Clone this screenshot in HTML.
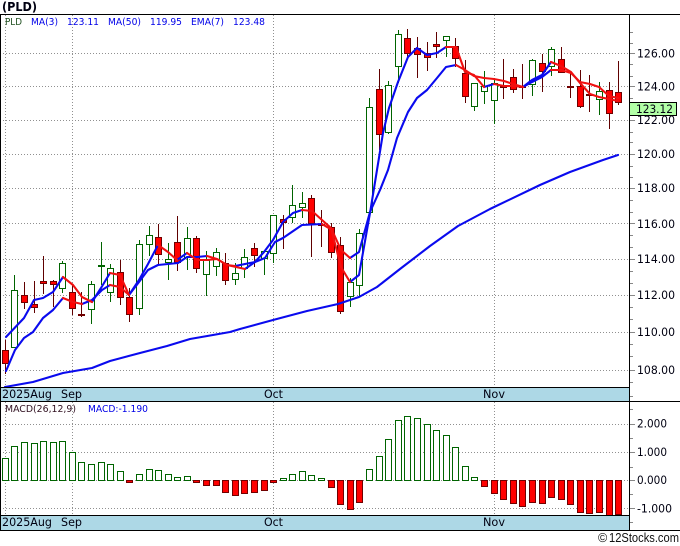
<!DOCTYPE html>
<html><head><meta charset="utf-8"><title>PLD</title>
<style>html,body{margin:0;padding:0;background:#fff;width:680px;height:546px;overflow:hidden}svg{display:block}
text{font-family:"DejaVu Sans","Liberation Sans",sans-serif;font-size:11.5px;fill:#001;lengthAdjust:spacingAndGlyphs}
.l{font-size:10px;fill:#0000e8}</style></head><body>
<svg width="680" height="546" viewBox="0 0 680 546" xmlns="http://www.w3.org/2000/svg">
<rect width="680" height="546" fill="#fff"/>
<g stroke="#909090" stroke-width="1" stroke-dasharray="1 2" fill="none" shape-rendering="crispEdges">
<path d="M0 53.5H629M0 86.5H629M0 120.5H629M0 154.5H629M0 188.5H629M0 223.5H629M0 259.5H629M0 295.5H629M0 332.5H629M0 370.5H629M0 424.5H629M0 452.5H629M0 480.5H629M0 508.5H629"/>
<path d="M5.5 15V515M72.5 15V515M273.5 15V515M494.5 15V515"/>
</g>
<path fill="none" stroke="#006400" d="M14.5 275V348M62.5 261V293M91.5 281V324M101.5 242V285M110.5 264V302M139.5 240V315M149.5 226V256M168.5 243V280M187.5 227V270M206.5 251V296M216.5 248V276M235.5 263V285M244.5 249V278M264.5 251V275M273.5 215V263M292.5 185V223M302.5 192V218M350.5 278V307M359.5 229V297M369.5 98V212M388.5 81V134M398.5 30V83M446.5 36V57M474.5 83V111M484.5 71V104M494.5 78V124M532.5 59V96M551.5 47V76M599.5 82V115"/>
<path fill="none" stroke="#600000" d="M5.5 340V374M24.5 282V309M34.5 281V313M43.5 256V294M53.5 280V307M72.5 285V315M81.5 292V317M120.5 260V305M129.5 288V322M158.5 224V265M177.5 216V271M196.5 236V273M225.5 253V285M254.5 243V267M283.5 215V249M311.5 195V257M321.5 210V247M331.5 223V258M340.5 237V314M379.5 69V150M407.5 29V57M417.5 37V78M427.5 42V71M436.5 32V58M455.5 38V67M465.5 60V103M503.5 59V99M513.5 69V93M522.5 64V99M542.5 54V92M561.5 47V73M570.5 72V98M580.5 70V108M589.5 75V112M609.5 82V129M618.5 61V105"/>
<path fill="#fff" stroke="#006400" d="M11.5 290.5h6V347.5h-6ZM59.5 263.5h6V288.5h-6ZM88.5 284.5h6V309.5h-6ZM98.5 265.5h6V266.5h-6ZM107.5 268.5h6V292.5h-6ZM136.5 244.5h6V308.5h-6ZM146.5 235.5h6V244.5h-6ZM165.5 259.5h6V262.5h-6ZM184.5 238.5h6V257.5h-6ZM203.5 260.5h6V274.5h-6ZM213.5 252.5h6V266.5h-6ZM232.5 273.5h6V279.5h-6ZM241.5 257.5h6V268.5h-6ZM261.5 251.5h6V258.5h-6ZM270.5 215.5h6V253.5h-6ZM289.5 205.5h6V217.5h-6ZM299.5 203.5h6V207.5h-6ZM347.5 282.5h6V296.5h-6ZM356.5 233.5h6V285.5h-6ZM366.5 107.5h6V212.5h-6ZM385.5 85.5h6V132.5h-6ZM395.5 34.5h6V66.5h-6ZM443.5 36.5h6V40.5h-6ZM471.5 83.5h6V106.5h-6ZM481.5 86.5h6V91.5h-6ZM491.5 83.5h6V100.5h-6ZM529.5 60.5h6V84.5h-6ZM548.5 49.5h6V66.5h-6ZM596.5 91.5h6V99.5h-6Z"/>
<path fill="#f00" stroke="#700000" d="M2.5 350.5h6V363.5h-6ZM21.5 295.5h6V302.5h-6ZM31.5 304.5h6V307.5h-6ZM40.5 281.5h6V283.5h-6ZM50.5 281.5h6V284.5h-6ZM69.5 292.5h6V308.5h-6ZM78.5 314.5h6V315.5h-6ZM117.5 272.5h6V297.5h-6ZM126.5 297.5h6V314.5h-6ZM155.5 237.5h6V254.5h-6ZM174.5 242.5h6V262.5h-6ZM193.5 238.5h6V268.5h-6ZM222.5 263.5h6V280.5h-6ZM251.5 248.5h6V255.5h-6ZM280.5 219.5h6V222.5h-6ZM308.5 198.5h6V223.5h-6ZM318.5 224.5h6V225.5h-6ZM328.5 227.5h6V252.5h-6ZM337.5 245.5h6V311.5h-6ZM376.5 89.5h6V134.5h-6ZM404.5 38.5h6V53.5h-6ZM414.5 48.5h6V54.5h-6ZM424.5 53.5h6V57.5h-6ZM433.5 44.5h6V46.5h-6ZM452.5 46.5h6V58.5h-6ZM462.5 73.5h6V96.5h-6ZM500.5 86.5h6V87.5h-6ZM510.5 77.5h6V89.5h-6ZM519.5 86.5h6V87.5h-6ZM539.5 63.5h6V71.5h-6ZM558.5 59.5h6V72.5h-6ZM567.5 86.5h6V87.5h-6ZM577.5 86.5h6V106.5h-6ZM586.5 94.5h6V95.5h-6ZM606.5 90.5h6V113.5h-6ZM615.5 92.5h6V102.5h-6Z"/>
<g fill="none" stroke-width="2.1" stroke-linejoin="round" stroke-linecap="round">
<g stroke="#0a0aee">
<polyline points="5,387 33,382 63,373 92,368 110,361 140,353 167,346 190,339 213,335 230,332 240,329 273,320 307,311 338,304 359,297 377,287 400,269 430,246 458,226 490,209 540,185 570,172 603,160 618,155"/>
<polyline points="6,337 24,318 34,300 43,298 53,292 63,277"/>
<polyline points="92,302 101,288 110,273"/>
<polyline points="129,295 139,280 148,264 158,245"/>
<polyline points="177,260 187,253"/>
<polyline points="245,269 255,262 264,252 273,240 283,222 293,213 302,210"/>
<polyline points="350,282 359,275 370,213 383,133 389,108 398,82 408,57 417,48 427,55 437,53 446,47"/>
<polyline points="484,87 494,84"/>
<polyline points="523,87 532,80 542,75 551,62"/>
<polyline points="6,371 15,350 24,338 33,332 43,318 53,310 63,298"/>
<polyline points="82,304 92,300 102,290 110,285"/>
<polyline points="129,295 139,282 148,270 158,265 168,264 178,263 187,257 197,257 207,256"/>
<polyline points="235,266 255,262 265,258 275,242 283,238 302,225 322,224"/>
<polyline points="350,258 359,252 370,212 380,190 388,170 397,138 408,112 417,98 427,90 437,78 446,67 456,65"/>
<polyline points="523,87 532,82 542,77 551,70"/>
</g>
<g stroke="#f01010">
<polyline points="63,277 73,285 82,297 92,302"/>
<polyline points="110,273 120,275 129,295"/>
<polyline points="158,245 168,252 177,260"/>
<polyline points="187,253 197,260 207,260 217,259 227,265 236,267 245,269"/>
<polyline points="302,210 312,211 322,220 331,228 341,267 350,282"/>
<polyline points="446,47 456,47 465,72 474,75 484,87"/>
<polyline points="494,84 504,86 513,86 523,87"/>
<polyline points="551,62 561,66 571,72 580,83 590,94 599,97 609,99 618,101"/>
<polyline points="63,298 73,302 82,304"/>
<polyline points="110,285 120,287 129,295"/>
<polyline points="207,256 217,259 227,265 235,266"/>
<polyline points="322,224 332,230 341,250 350,258"/>
<polyline points="456,65 465,70 474,76 484,78 494,79 504,81 513,84 523,87"/>
<polyline points="551,70 561,70 571,73 580,82 590,84 599,87 609,96 618,98"/>
</g>
</g>
<path fill="#fff" stroke="#006400" d="M2.5 458.5h6V480.5h-6ZM11.5 446.5h6V480.5h-6ZM21.5 442.5h6V480.5h-6ZM31.5 443.5h6V480.5h-6ZM40.5 441.5h6V480.5h-6ZM50.5 442.5h6V480.5h-6ZM59.5 441.5h6V480.5h-6ZM69.5 452.5h6V480.5h-6ZM78.5 462.5h6V480.5h-6ZM88.5 464.5h6V480.5h-6ZM98.5 462.5h6V480.5h-6ZM107.5 464.5h6V480.5h-6ZM117.5 471.5h6V480.5h-6ZM136.5 474.5h6V480.5h-6ZM146.5 469.5h6V480.5h-6ZM155.5 470.5h6V480.5h-6ZM165.5 474.5h6V480.5h-6ZM174.5 477.5h6V480.5h-6ZM184.5 476.5h6V480.5h-6ZM280.5 478.5h6V480.5h-6ZM289.5 474.5h6V480.5h-6ZM299.5 471.5h6V480.5h-6ZM308.5 475.5h6V480.5h-6ZM318.5 478.5h6V480.5h-6ZM366.5 469.5h6V480.5h-6ZM376.5 456.5h6V480.5h-6ZM385.5 439.5h6V480.5h-6ZM395.5 420.5h6V480.5h-6ZM404.5 416.5h6V480.5h-6ZM414.5 418.5h6V480.5h-6ZM424.5 424.5h6V480.5h-6ZM433.5 430.5h6V480.5h-6ZM443.5 435.5h6V480.5h-6ZM452.5 447.5h6V480.5h-6ZM462.5 466.5h6V480.5h-6ZM471.5 477.5h6V480.5h-6Z"/>
<path fill="#f00" stroke="#700000" d="M126.5 480.5h6V482.5h-6ZM193.5 480.5h6V482.5h-6ZM203.5 480.5h6V485.5h-6ZM213.5 480.5h6V485.5h-6ZM222.5 480.5h6V492.5h-6ZM232.5 480.5h6V495.5h-6ZM241.5 480.5h6V493.5h-6ZM251.5 480.5h6V492.5h-6ZM261.5 480.5h6V490.5h-6ZM270.5 480.5h6V482.5h-6ZM328.5 480.5h6V487.5h-6ZM337.5 480.5h6V504.5h-6ZM347.5 480.5h6V509.5h-6ZM356.5 480.5h6V502.5h-6ZM481.5 480.5h6V486.5h-6ZM491.5 480.5h6V493.5h-6ZM500.5 480.5h6V499.5h-6ZM510.5 480.5h6V503.5h-6ZM519.5 480.5h6V506.5h-6ZM529.5 480.5h6V502.5h-6ZM539.5 480.5h6V503.5h-6ZM548.5 480.5h6V497.5h-6ZM558.5 480.5h6V499.5h-6ZM567.5 480.5h6V504.5h-6ZM577.5 480.5h6V512.5h-6ZM586.5 480.5h6V513.5h-6ZM596.5 480.5h6V512.5h-6ZM606.5 480.5h6V516h-6ZM615.5 480.5h6V514.5h-6Z"/>
<rect x="0" y="387.5" width="629" height="14" fill="#add8e6"/>
<rect x="0" y="515.5" width="629" height="15" fill="#add8e6"/>
<path fill="none" stroke="#000" d="M0 14.5H680M0.5 14V530M629.5 14V530M0 387.5H629M0 401.5H680M0 515.5H629M0 530.5H680"/>
<path fill="none" stroke="#888" d="M630 53.5h5M630 86.5h5M630 120.5h5M630 154.5h5M630 188.5h5M630 223.5h5M630 259.5h5M630 295.5h5M630 332.5h5M630 370.5h5M630 424.5h5M630 452.5h5M630 480.5h5M630 508.5h5M630 32.5h3M630 43.5h3M630 64.5h3M630 76.5h3M630 98.5h3M630 132.5h3M630 142.5h3M630 166.5h3M630 177.5h3M630 200.5h3M630 212.5h3M630 235.5h3M630 247.5h3M630 271.5h3M630 283.5h3M630 307.5h3M630 319.5h3M630 344.5h3M630 356.5h3M630 382.5h3M630 396.5h3M630 409.5h3M630 438.5h3M630 467.5h3M630 494.5h3M630 522.5h3"/>
<text x="2" y="11" style="font-weight:bold;font-size:12px" textLength="35" lengthAdjust="spacingAndGlyphs">(PLD)</text>
<text x="5" y="25" class="l" style="fill:#205020" textLength="17" lengthAdjust="spacingAndGlyphs">PLD</text>
<text x="31" y="25" class="l" textLength="27" lengthAdjust="spacingAndGlyphs">MA(3)</text>
<text x="67" y="25" class="l" textLength="32" lengthAdjust="spacingAndGlyphs">123.11</text>
<text x="108" y="25" class="l" textLength="33" lengthAdjust="spacingAndGlyphs">MA(50)</text>
<text x="150" y="25" class="l" textLength="32" lengthAdjust="spacingAndGlyphs">119.95</text>
<text x="191" y="25" class="l" textLength="33" lengthAdjust="spacingAndGlyphs">EMA(7)</text>
<text x="233" y="25" class="l" textLength="32" lengthAdjust="spacingAndGlyphs">123.48</text>
<text x="5" y="412" class="l" style="fill:#301020" textLength="71" lengthAdjust="spacingAndGlyphs">MACD(26,12,9)</text>
<text x="88" y="412" class="l" textLength="60" lengthAdjust="spacingAndGlyphs">MACD:-1.190</text>
<text x="637" y="57.5" textLength="38" lengthAdjust="spacingAndGlyphs">126.00</text>
<text x="637" y="90.5" textLength="38" lengthAdjust="spacingAndGlyphs">124.00</text>
<text x="637" y="124" textLength="38" lengthAdjust="spacingAndGlyphs">122.00</text>
<text x="637" y="158" textLength="38" lengthAdjust="spacingAndGlyphs">120.00</text>
<text x="637" y="192" textLength="38" lengthAdjust="spacingAndGlyphs">118.00</text>
<text x="637" y="228" textLength="38" lengthAdjust="spacingAndGlyphs">116.00</text>
<text x="637" y="263" textLength="38" lengthAdjust="spacingAndGlyphs">114.00</text>
<text x="637" y="299" textLength="38" lengthAdjust="spacingAndGlyphs">112.00</text>
<text x="637" y="336" textLength="38" lengthAdjust="spacingAndGlyphs">110.00</text>
<text x="637" y="374" textLength="38" lengthAdjust="spacingAndGlyphs">108.00</text>
<rect x="629.5" y="102.5" width="47" height="13" fill="#b2ffa6" stroke="#000"/>
<text x="636" y="113" textLength="37" lengthAdjust="spacingAndGlyphs">123.12</text>
<text x="637" y="427.5" textLength="30" lengthAdjust="spacingAndGlyphs">2.000</text>
<text x="637" y="456" textLength="30" lengthAdjust="spacingAndGlyphs">1.000</text>
<text x="637" y="484" textLength="30" lengthAdjust="spacingAndGlyphs">0.000</text>
<text x="637" y="512.5" textLength="35" lengthAdjust="spacingAndGlyphs">-1.000</text>
<text x="2" y="398" textLength="50" lengthAdjust="spacingAndGlyphs">2025Aug</text>
<text x="61" y="398" textLength="21" lengthAdjust="spacingAndGlyphs">Sep</text>
<text x="264" y="398" textLength="19" lengthAdjust="spacingAndGlyphs">Oct</text>
<text x="483" y="398" textLength="22" lengthAdjust="spacingAndGlyphs">Nov</text>
<text x="2" y="526" textLength="50" lengthAdjust="spacingAndGlyphs">2025Aug</text>
<text x="61" y="526" textLength="21" lengthAdjust="spacingAndGlyphs">Sep</text>
<text x="264" y="526" textLength="19" lengthAdjust="spacingAndGlyphs">Oct</text>
<text x="483" y="526" textLength="22" lengthAdjust="spacingAndGlyphs">Nov</text>
<text x="598" y="542" style="font-family:'Liberation Sans',sans-serif;font-size:12.5px;fill:#111">©</text>
<text x="609" y="542" style="font-family:'Liberation Sans',sans-serif;font-size:12.5px;fill:#111" textLength="70" lengthAdjust="spacingAndGlyphs">12Stocks.com</text>
</svg>
</body></html>
